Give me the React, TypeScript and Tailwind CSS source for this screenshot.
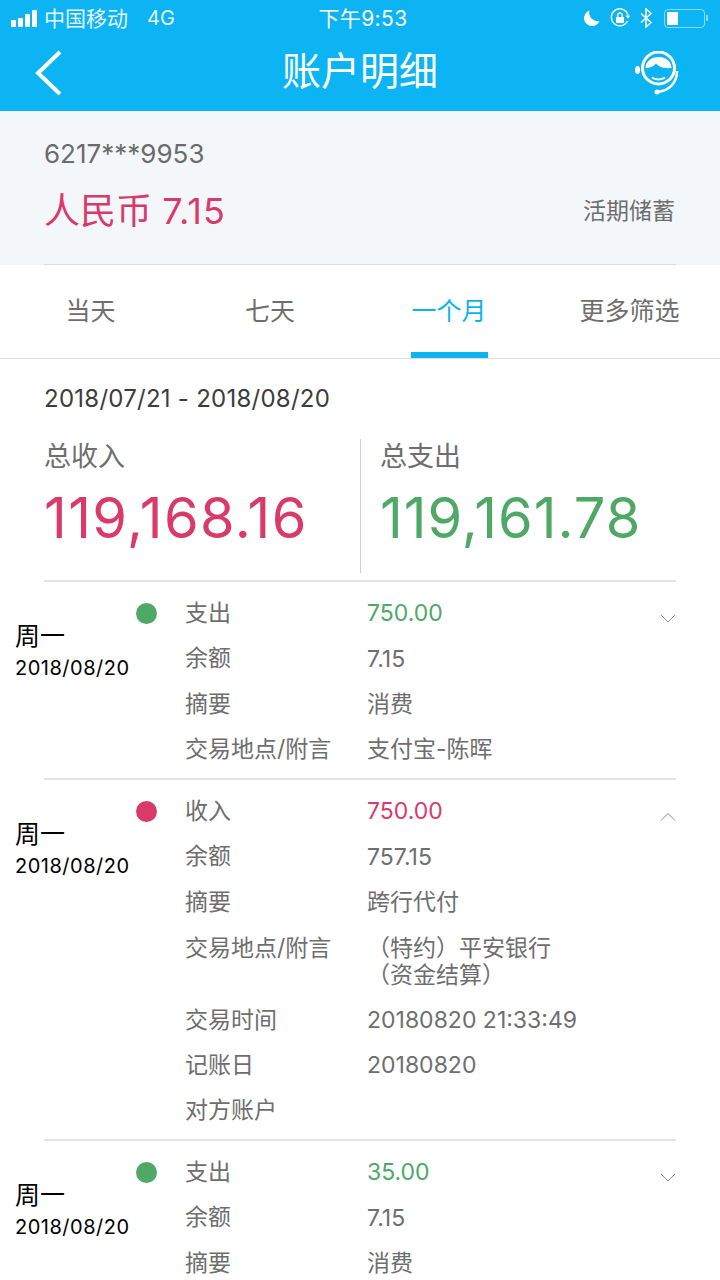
import React from 'react';

const FONT = "font-['Inter','Noto_Sans_CJK_SC',sans-serif]";

const GREEN = 'text-[#4fa866]';
const RED = 'text-[#d93a69]';

interface Row {
  label: string;
  value?: string;
  lines?: string[];
}

interface Tx {
  kind: '支出' | '收入';
  amount: string;
  rows: Row[];
  open?: boolean;
  height: string;
}

const TXS: Tx[] = [
  {
    kind: '支出',
    amount: '750.00',
    height: 'h-[198px]',
    rows: [
      { label: '余额', value: '7.15' },
      { label: '摘要', value: '消费' },
      { label: '交易地点/附言', value: '支付宝-陈晖' },
    ],
  },
  {
    kind: '收入',
    amount: '750.00',
    open: true,
    height: 'h-[361px]',
    rows: [
      { label: '余额', value: '757.15' },
      { label: '摘要', value: '跨行代付' },
      { label: '交易地点/附言', lines: ['（特约）平安银行', '（资金结算）'] },
      { label: '交易时间', value: '20180820 21:33:49' },
      { label: '记账日', value: '20180820' },
      { label: '对方账户' },
    ],
  },
  {
    kind: '支出',
    amount: '35.00',
    height: 'h-[140px]',
    rows: [
      { label: '余额', value: '7.15' },
      { label: '摘要', value: '消费' },
    ],
  },
];

function StatusBar() {
  return (
    <div className="h-[36px] flex items-center justify-between pl-[11px] pr-[12px] text-white">
      <div className="flex items-center w-[240px]">
        <div className="flex items-end gap-[2px] h-[17px] mr-[7px]">
          <span className="w-[5px] h-[7px] bg-white rounded-[1px]" />
          <span className="w-[5px] h-[9px] bg-white rounded-[1px]" />
          <span className="w-[5px] h-[13px] bg-white rounded-[1px]" />
          <span className="w-[5px] h-[17px] bg-white rounded-[1px]" />
        </div>
        <span className="text-[21px] leading-none opacity-90">中国移动</span>
        <span className="text-[20px] leading-none opacity-90 ml-[19px]">4G</span>
      </div>
      <span className="text-[21px] leading-none ml-[7px] tracking-[0.4px]">下午9:53</span>
      <div className="flex items-center justify-end w-[240px]">
        <svg width="17" height="17" viewBox="0 0 17 17" className="mr-[10px]">
          <path d="M6.500 0.500a8 8 0 1 0 10 10.500A8.500 8.500 0 0 1 6.500 0.500Z" fill="white" />
        </svg>
        <svg width="20" height="20" viewBox="0 0 20 20" className="mr-[10px]" fill="none">
          <path d="M17.500 13A8.500 8.500 0 1 1 18 7" stroke="white" strokeWidth="1.400" />
          <path d="M15.500 7.500h5l-2.500 3Z" fill="white" />
          <rect x="6" y="9" width="8" height="6" rx="1" fill="white" />
          <path d="M7.800 9V7a2.200 2.200 0 0 1 4.400 0v2" stroke="white" strokeWidth="1.300" />
        </svg>
        <svg width="13" height="20" viewBox="0 0 13 20" className="mr-[11px]" fill="none">
          <path d="M1 5.500l10 9-5 4.500V1l5 4.500-10 9" stroke="white" strokeWidth="1.500" />
        </svg>
        <div className="w-[41px] h-[19px] rounded-[4px] border-[1.500px] border-white/50 p-[2px]">
          <div className="w-[11px] h-full bg-white" />
        </div>
        <span className="w-[2px] h-[6px] ml-[1px] bg-white/50" />
      </div>
    </div>
  );
}

function Header() {
  return (
    <div className="h-[75px] flex items-center justify-between pl-[34px] pr-[39px] relative">
      <svg width="30" height="48" viewBox="0 0 30 48" fill="none" className="-mt-[2px]">
        <path d="M26 3L4 24l22 21" stroke="white" strokeWidth="4" />
      </svg>
      <span className="absolute left-0 right-0 top-[10px] text-center text-white text-[39px] leading-[50px]">账户明细</span>
      <svg width="48" height="46" viewBox="0 0 48 46" fill="none">
        <circle cx="25.500" cy="17" r="16" stroke="white" strokeWidth="3" />
        <ellipse cx="4.500" cy="19" rx="2.500" ry="4" fill="white" />
        <path d="M12.500 17C12.500 10.500 18.500 6 25.500 6S38.500 10.500 38.500 17C33 17.500 27 17 23 12.500C20 16 16.500 17 12.500 17Z" fill="white" />
        <path d="M19 26.500c3 2.500 10 2.500 13 0" stroke="white" strokeWidth="2" />
        <path d="M44 20c0 12-8 20-20 21" stroke="white" strokeWidth="2.500" />
        <circle cx="24" cy="41" r="2.500" fill="white" />
      </svg>
    </div>
  );
}

function Tabs() {
  const tabs = ['当天', '七天', '一个月', '更多筛选'];
  return (
    <div className="h-[94px] border-b border-[#dedede] grid grid-cols-[181px_178px_180px_181px] text-[25px] text-[#6e6e6e]">
      {tabs.map((t, i) => (
        <div key={t} className={`relative flex items-center justify-center ${i === 2 ? 'text-[#0cb4ef]' : ''}`}>
          {t}
          {i === 2 && <span className="absolute bottom-0 left-[52px] w-[77px] h-[6px] bg-[#0cb4ef]" />}
        </div>
      ))}
    </div>
  );
}

function Chevron({ up }: { up?: boolean }) {
  return (
    <svg width="16" height="9" viewBox="0 0 16 9" fill="none" className="mt-[23px] ml-px">
      <path d={up ? 'M1 8.500L8 1.500l7 7' : 'M1 1l7 7 7-7'} stroke="#8c8c8c" strokeWidth="1" />
    </svg>
  );
}

function TxRow({ tx, last }: { tx: Tx; last: boolean }) {
  const color = tx.kind === '支出' ? GREEN : RED;
  const dot = tx.kind === '支出' ? 'bg-[#4fa866]' : 'bg-[#d93a69]';
  return (
    <div className={`relative ${tx.height} flex pl-[15px] pr-[44px] pt-[9px] overflow-hidden`}>
      <div className="w-[125px] shrink-0 pt-[29px] text-black">
        <div className="text-[25px] leading-[32px]">周一</div>
        <div className="text-[20px] leading-[32px] whitespace-nowrap tracking-[0.5px]">2018/08/20</div>
      </div>
      <div className="w-[45px] shrink-0 pt-[12px]">
        <span className={`block w-[21px] h-[21px] -ml-[4px] rounded-full ${dot}`} />
      </div>
      <div className="flex-1 min-w-0 text-[23px] text-[#6e6e6e]">
        <div className="flex h-[45.250px] items-center">
          <span className="w-[182px]">{tx.kind}</span>
          <span className={color}>{tx.amount}</span>
        </div>
        {tx.rows.map((r) => (
          <div key={r.label} className={`flex ${r.lines ? 'h-[73px] pt-[10px]' : 'h-[45.250px] items-center'}`}>
            <span className="w-[182px] shrink-0 whitespace-nowrap leading-[27px]">{r.label}</span>
            {r.lines ? (
              <div className="leading-[27px]">
                {r.lines[0]}
                <br />
                {r.lines[1]}
              </div>
            ) : (
              <span>{r.value}</span>
            )}
          </div>
        ))}
      </div>
      <div className="w-0 flex justify-end">
        <div className="shrink-0">
          <Chevron up={tx.open} />
        </div>
      </div>
      {!last && <div className="absolute left-[44px] right-[44px] bottom-0 h-[2px] bg-[#e4e4e4]" />}
    </div>
  );
}

export default function App() {
  return (
    <div className={`w-[720px] h-[1280px] overflow-hidden bg-white ${FONT}`}>
      <div className="bg-[#0cb4f3] h-[111px]">
        <StatusBar />
        <Header />
      </div>

      <div className="bg-[#f3f7fa] h-[154px] px-[44px] pt-[27px]">
        <div className="text-[26px] leading-[32px] text-[#6b6b6b]">6217***9953</div>
        <div className="flex items-center justify-between mt-[15px]">
          <span className="text-[36px] leading-[52px] text-[#d93a69]">
            人民币 <span className="tracking-[1px]">7.15</span>
          </span>
          <span className="text-[23px] text-[#6e6e6e] mr-px">活期储蓄</span>
        </div>
      </div>
      <div className="mx-[44px] h-px bg-[#dedede] -mt-px" />

      <Tabs />

      <div className="px-[44px]">
        <div className="h-[80px] flex items-center text-[24px] text-[#3c3c3c] tracking-[0.25px]">2018/07/21 - 2018/08/20</div>
        <div className="flex h-[134px] items-stretch">
          <div className="w-[317px] border-r border-[#cfcfcf] pt-px">
            <div className="text-[27px] leading-[34px] text-[#6e6e6e]">总收入</div>
            <div className={`text-[56px] leading-[80px] mt-[4px] whitespace-nowrap tracking-[1.400px] ${RED}`}>119,168.16</div>
          </div>
          <div className="pl-[19px] pt-px">
            <div className="text-[27px] leading-[34px] text-[#6e6e6e]">总支出</div>
            <div className={`text-[56px] leading-[80px] mt-[4px] whitespace-nowrap tracking-[1px] ${GREEN}`}>119,161.78</div>
          </div>
        </div>
        <div className="h-[2px] mt-[7px] bg-[#e4e4e4]" />
      </div>

      {TXS.map((tx, i) => (
        <TxRow key={i} tx={tx} last={i === TXS.length - 1} />
      ))}
    </div>
  );
}
